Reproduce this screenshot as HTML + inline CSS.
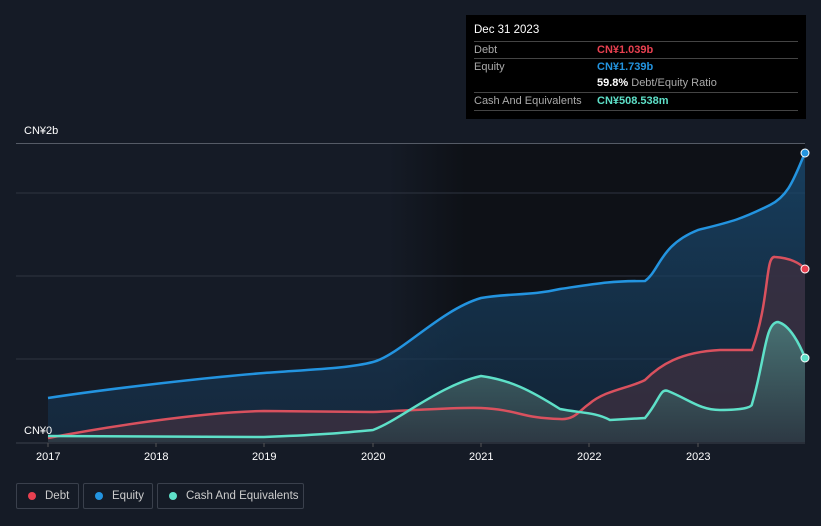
<!DOCTYPE html>
<html><head><meta charset="utf-8"><style>
body{margin:0;width:821px;height:526px;background:#151b26;font-family:"Liberation Sans","Noto Sans CJK SC",sans-serif;overflow:hidden;position:relative}
.tt{position:absolute;left:466px;top:15px;width:340px;height:104px;background:#000;color:#fff;font-size:11px}
.tt .h{position:absolute;left:8px;top:9px;font-size:11.5px}
.row{position:absolute;left:8px;width:324px;border-top:1px solid #444;height:17px;line-height:17px;white-space:nowrap}
.row span.l{color:#aaa;position:absolute;left:0}
.row span.v{position:absolute;left:123px;font-weight:bold}
.leg{position:absolute;top:483px;height:26px;border:1px solid #3a404c;border-radius:2px;color:#ccc;font-size:11.5px;line-height:24px;box-sizing:border-box;white-space:nowrap}
.leg i{position:absolute;left:11px;top:8px;width:8px;height:8px;border-radius:50%}
.ax{position:absolute;color:#fff;font-size:11px}
</style></head><body>
<svg width="821" height="526" style="position:absolute;left:0;top:0">
<defs>
<linearGradient id="bg" x1="0" x2="1"><stop offset="0" stop-color="#151b26" stop-opacity="0"/><stop offset="0.45" stop-color="#0e1117" stop-opacity="0"/><stop offset="0.55" stop-color="#0e1117"/><stop offset="1" stop-color="#0e1117"/></linearGradient>
<linearGradient id="eq" x1="0" y1="0" x2="0" y2="1"><stop offset="0" stop-color="#1a4a70" stop-opacity="0.8"/><stop offset="1" stop-color="#15304a" stop-opacity="0.6"/></linearGradient>
<linearGradient id="cs" x1="0" y1="0" x2="0" y2="1"><stop offset="0" stop-color="#4a7878" stop-opacity="0.9"/><stop offset="1" stop-color="#2c3a44" stop-opacity="0.9"/></linearGradient>
</defs>
<rect x="48" y="143" width="757" height="299" fill="url(#bg)"/>
<g stroke="#2e3440" stroke-width="1"><line x1="16" y1="193" x2="805" y2="193"/><line x1="16" y1="276" x2="805" y2="276"/><line x1="16" y1="359" x2="805" y2="359"/></g>
<line x1="16" y1="143.5" x2="805" y2="143.5" stroke="#555b66"/>
<path d="M48,398 C100,390 200,378 264,373 C320,369 350,368 373,362 C400,355 440,310 481,298 C510,293 530,296 560,289 C600,283 610,281 645,281 C660,270 660,245 698,230 C730,222 740,220 770,205 C790,195 795,175 805,153 L805,442 L48,442Z" fill="url(#eq)"/>
<path d="M48,438 C100,428 200,412 264,411 L373,412 C420,410 460,407 481,408 C520,410 520,418 560,419 C575,420 580,410 589,404 C605,390 630,388 645,380 C660,365 680,352 720,350 L752,350 C770,300 765,255 775,257 C790,258 800,263 805,269 L805,442 L48,442Z" fill="#3a2f40" opacity="0.85"/>
<path d="M48,436 L264,437 C320,435 340,433 373,430 C400,420 440,385 481,376 C510,380 530,390 560,409 C580,413 595,412 610,420 L645,418 C660,400 660,388 668,391 C690,400 700,410 720,410 C740,410 752,408 752,404 C765,360 765,322 778,322 C790,325 800,345 805,358 L805,442 L48,442Z" fill="url(#cs)"/>
<path d="M48,398 C100,390 200,378 264,373 C320,369 350,368 373,362 C400,355 440,310 481,298 C510,293 530,296 560,289 C600,283 610,281 645,281 C660,270 660,245 698,230 C730,222 740,220 770,205 C790,195 795,175 805,153" fill="none" stroke="#2394e0" stroke-width="2.5"/>
<path d="M48,438 C100,428 200,412 264,411 L373,412 C420,410 460,407 481,408 C520,410 520,418 560,419 C575,420 580,410 589,404 C605,390 630,388 645,380 C660,365 680,352 720,350 L752,350 C770,300 765,255 775,257 C790,258 800,263 805,269" fill="none" stroke="#d9515e" stroke-width="2.5"/>
<path d="M48,436 L264,437 C320,435 340,433 373,430 C400,420 440,385 481,376 C510,380 530,390 560,409 C580,413 595,412 610,420 L645,418 C660,400 660,388 668,391 C690,400 700,410 720,410 C740,410 752,408 752,404 C765,360 765,322 778,322 C790,325 800,345 805,358" fill="none" stroke="#5ee0c8" stroke-width="2.5"/>
<circle cx="805" cy="153" r="4" fill="#2394e0" stroke="#fff" stroke-width="1"/>
<circle cx="805" cy="269" r="4" fill="#e84050" stroke="#fff" stroke-width="1"/>
<circle cx="805" cy="358" r="4" fill="#5ee0c8" stroke="#fff" stroke-width="1"/>
<line x1="16" y1="443" x2="805" y2="443" stroke="#3a404c"/>
<g stroke="#555" ><line x1="48" y1="443" x2="48" y2="447"/><line x1="156" y1="443" x2="156" y2="447"/><line x1="264" y1="443" x2="264" y2="447"/><line x1="373" y1="443" x2="373" y2="447"/><line x1="481" y1="443" x2="481" y2="447"/><line x1="589" y1="443" x2="589" y2="447"/><line x1="698" y1="443" x2="698" y2="447"/></g>
</svg>
<div class="ax" style="left:24px;top:125px">CN¥2b</div>
<div class="ax" style="left:24px;top:425px">CN¥0</div>
<div class="ax" style="left:36px;top:451px">2017</div>
<div class="ax" style="left:144px;top:451px">2018</div>
<div class="ax" style="left:252px;top:451px">2019</div>
<div class="ax" style="left:361px;top:451px">2020</div>
<div class="ax" style="left:469px;top:451px">2021</div>
<div class="ax" style="left:577px;top:451px">2022</div>
<div class="ax" style="left:686px;top:451px">2023</div>
<div class="tt">
<div class="h">Dec 31 2023</div>
<div class="row" style="top:26px"><span class="l">Debt</span><span class="v" style="color:#e84050">CN¥1.039b</span></div>
<div class="row" style="top:43px"><span class="l">Equity</span><span class="v" style="color:#2394e0">CN¥1.739b</span></div>
<div class="row" style="top:60px;border-top:none"><span class="v" style="color:#fff">59.8% <span style="color:#aaa;font-weight:normal">Debt/Equity Ratio</span></span></div>
<div class="row" style="top:77px;border-bottom:1px solid #444"><span class="l">Cash And Equivalents</span><span class="v" style="color:#5ee0c8">CN¥508.538m</span></div>
</div>
<div class="leg" style="left:16px;width:63px"><i style="background:#e84050"></i><span style="position:absolute;left:28px">Debt</span></div>
<div class="leg" style="left:83px;width:70px"><i style="background:#2394e0"></i><span style="position:absolute;left:28px">Equity</span></div>
<div class="leg" style="left:157px;width:147px"><i style="background:#5ee0c8"></i><span style="position:absolute;left:28px">Cash And Equivalents</span></div>
</body></html>
